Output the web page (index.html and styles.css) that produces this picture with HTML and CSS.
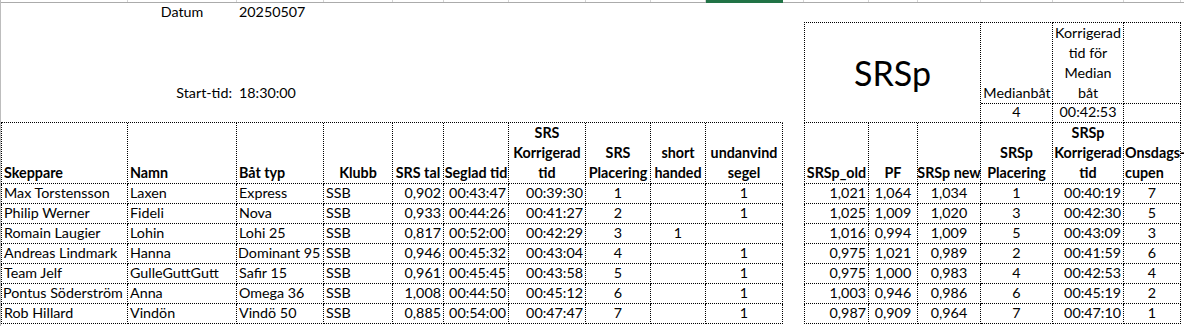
FILE: index.html
```html
<!DOCTYPE html>
<html lang="sv">
<head>
<meta charset="utf-8">
<title>SRS resultat</title>
<link rel="stylesheet" href="styles.css">
</head>
<body>
<div class="sheet">
  <div class="ruler">
    <div></div><div></div><div></div><div></div><div></div><div></div><div></div><div></div><div></div><div class="sel"></div><div></div><div></div><div></div><div></div><div></div><div></div><div></div>
  </div>
  <div class="grid">
    <!-- row 1 -->
    <div class="c"></div>
    <div class="c m">Datum</div>
    <div class="c">20250507</div>
    <div class="c s14"></div>
    <!-- row 2 -->
    <div class="c"></div>
    <div class="c r pr">Start-tid:</div>
    <div class="c">18:30:00</div>
    <div class="c s8"></div>
    <div class="c b bl bt m big s3r2 mid">SRSp</div>
    <div class="c b bt m tight">Medianbåt</div>
    <div class="c b bt m">Korrigerad<br>tid för<br>Median<br>båt</div>
    <div class="c b bt"></div>
    <!-- row 3 -->
    <div class="c s10 bb"></div>
    <div class="c"></div>
    <div class="c b m">4</div>
    <div class="c b m">00:42:53</div>
    <div class="c b"></div>
    <!-- header row -->
    <div class="c b bl h">Skeppare</div>
    <div class="c b h">Namn</div>
    <div class="c b h">Båt typ</div>
    <div class="c b h m">Klubb</div>
    <div class="c b h m">SRS tal</div>
    <div class="c b h m">Seglad tid</div>
    <div class="c b h m">SRS<br>Korrigerad<br>tid</div>
    <div class="c b h m">SRS<br>Placering</div>
    <div class="c b h m">short<br>handed</div>
    <div class="c b h m">undanvind<br>segel</div>
    <div class="c"></div>
    <div class="c b bl h m">SRSp_old</div>
    <div class="c b h m">PF</div>
    <div class="c b h m">SRSp new</div>
    <div class="c b h m">SRSp<br>Placering</div>
    <div class="c b h m">SRSp<br>Korrigerad<br>tid</div>
    <div class="c b h tight">Onsdags-<br>cupen</div>

    <div class="c b bl d">Max Torstensson</div><div class="c b d">Laxen</div><div class="c b d">Express</div><div class="c b d">SSB</div><div class="c b d r">0,902</div><div class="c b d r">00:43:47</div><div class="c b d r">00:39:30</div><div class="c b d m">1</div><div class="c b d m"></div><div class="c b d m">1</div>
    <div class="c"></div>
    <div class="c b bl d r">1,021</div><div class="c b d m">1,064</div><div class="c b d m">1,034</div><div class="c b d m">1</div><div class="c b d r">00:40:19</div><div class="c b d m">7</div>

    <div class="c b bl d">Philip Werner</div><div class="c b d">Fideli</div><div class="c b d">Nova</div><div class="c b d">SSB</div><div class="c b d r">0,933</div><div class="c b d r">00:44:26</div><div class="c b d r">00:41:27</div><div class="c b d m">2</div><div class="c b d m"></div><div class="c b d m">1</div>
    <div class="c"></div>
    <div class="c b bl d r">1,025</div><div class="c b d m">1,009</div><div class="c b d m">1,020</div><div class="c b d m">3</div><div class="c b d r">00:42:30</div><div class="c b d m">5</div>

    <div class="c b bl d">Romain Laugier</div><div class="c b d">Lohin</div><div class="c b d">Lohi 25</div><div class="c b d">SSB</div><div class="c b d r">0,817</div><div class="c b d r">00:52:00</div><div class="c b d r">00:42:29</div><div class="c b d m">3</div><div class="c b d m">1</div><div class="c b d m"></div>
    <div class="c"></div>
    <div class="c b bl d r">1,016</div><div class="c b d m">0,994</div><div class="c b d m">1,009</div><div class="c b d m">5</div><div class="c b d r">00:43:09</div><div class="c b d m">3</div>

    <div class="c b bl d">Andreas Lindmark</div><div class="c b d">Hanna</div><div class="c b d tight">Dominant 95</div><div class="c b d">SSB</div><div class="c b d r">0,946</div><div class="c b d r">00:45:32</div><div class="c b d r">00:43:04</div><div class="c b d m">4</div><div class="c b d m"></div><div class="c b d m">1</div>
    <div class="c"></div>
    <div class="c b bl d r">0,975</div><div class="c b d m">1,021</div><div class="c b d m">0,989</div><div class="c b d m">2</div><div class="c b d r">00:41:59</div><div class="c b d m">6</div>

    <div class="c b bl d">Team Jelf</div><div class="c b d">GulleGuttGutt</div><div class="c b d">Safir 15</div><div class="c b d">SSB</div><div class="c b d r">0,961</div><div class="c b d r">00:45:45</div><div class="c b d r">00:43:58</div><div class="c b d m">5</div><div class="c b d m"></div><div class="c b d m">1</div>
    <div class="c"></div>
    <div class="c b bl d r">0,975</div><div class="c b d m">1,000</div><div class="c b d m">0,983</div><div class="c b d m">4</div><div class="c b d r">00:42:53</div><div class="c b d m">4</div>

    <div class="c b bl d tight">Pontus Söderström</div><div class="c b d">Anna</div><div class="c b d">Omega 36</div><div class="c b d">SSB</div><div class="c b d r">1,008</div><div class="c b d r">00:44:50</div><div class="c b d r">00:45:12</div><div class="c b d m">6</div><div class="c b d m"></div><div class="c b d m">1</div>
    <div class="c"></div>
    <div class="c b bl d r">1,003</div><div class="c b d m">0,946</div><div class="c b d m">0,986</div><div class="c b d m">6</div><div class="c b d r">00:45:19</div><div class="c b d m">2</div>

    <div class="c b bl d">Rob Hillard</div><div class="c b d">Vindön</div><div class="c b d">Vindö 50</div><div class="c b d">SSB</div><div class="c b d r">0,885</div><div class="c b d r">00:54:00</div><div class="c b d r">00:47:47</div><div class="c b d m">7</div><div class="c b d m"></div><div class="c b d m">1</div>
    <div class="c"></div>
    <div class="c b bl d r">0,987</div><div class="c b d m">0,909</div><div class="c b d m">0,964</div><div class="c b d m">7</div><div class="c b d r">00:47:10</div><div class="c b d m">1</div>
  </div>
</div>
</body>
</html>
```

FILE: styles.css
```css
* { box-sizing: border-box; }
html, body {
  margin: 0;
  background: #fff;
}
body {
  font-family: Lato, "Liberation Sans", sans-serif;
  font-size: 14.3px;
  color: #000;
}
.sheet {
  width: 1184px;
  height: 326px;
  border-left: 1px solid #bdbdbd;
  overflow: hidden;
}
.ruler, .grid {
  display: grid;
  grid-template-columns: 127px 109px 87px 69px 51px 65px 77px 65px 55px 77px 21px 65px 49px 63px 72px 71px 57px;
}
.ruler {
  height: 3px;
  border-bottom: 1px solid #ababab;
}
.ruler > div {
  border-right: 1px solid #d4d4d4;
}
.ruler > .sel {
  background: #217346;
  border-right-color: #217346;
  box-shadow: 0 1px 0 #217346;
}
.grid {
  grid-template-rows: 19px 82px 19px 61px repeat(7, 20px);
}
.c {
  display: flex;
  align-items: flex-end;
  justify-content: flex-start;
  padding: 0 2px;
  line-height: 20px;
  white-space: nowrap;
  border-right: 1px dotted transparent;
  border-bottom: 1px dotted transparent;
}
.grid > .c:nth-child(-n+4) { line-height: 18px; }
.b {
  border-right-color: #000;
  border-bottom-color: #000;
}
.bb { border-bottom-color: #000; }
.bl { border-left: 1px dotted #000; }
.bt { border-top: 1px dotted #000; }
.m { justify-content: center; text-align: center; }
.r { justify-content: flex-end; text-align: right; }
.pr { padding-right: 4px; }
.h { font-weight: 700; }
.d { line-height: 19px; padding-bottom: 1px; }
.tight { padding-left: 1px; padding-right: 0; }
.s14 { grid-column: span 14; }
.s8 { grid-column: span 8; }
.s10 { grid-column: span 10; }
.s3r2 { grid-column: span 3; grid-row: span 2; }
.mid { align-items: center; }
.big { font-size: 34px; line-height: 40px; }
```
